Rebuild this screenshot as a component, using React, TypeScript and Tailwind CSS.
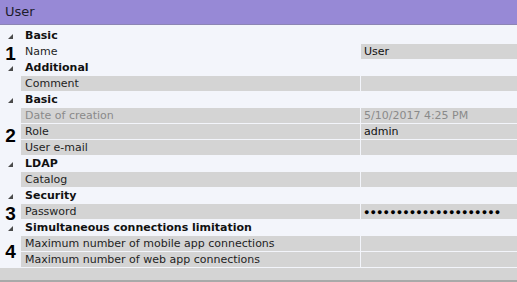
import React from 'react';

type Field = { label: string; value?: string; muted?: boolean; plainLabel?: boolean; password?: boolean };
type Group = { title: string; marker?: string; markerRow?: number; fields: Field[] };

const groups: Group[] = [
    { title: 'Basic', marker: '1', fields: [{ label: 'Name', value: 'User', plainLabel: true }] },
    { title: 'Additional', fields: [{ label: 'Comment' }] },
    {
        title: 'Basic',
        marker: '2',
        markerRow: 1,
        fields: [
            { label: 'Date of creation', value: '5/10/2017 4:25 PM', muted: true },
            { label: 'Role', value: 'admin' },
            { label: 'User e-mail' },
        ],
    },
    { title: 'LDAP', fields: [{ label: 'Catalog' }] },
    { title: 'Security', marker: '3', fields: [{ label: 'Password', password: true }] },
    {
        title: 'Simultaneous connections limitation',
        marker: '4',
        fields: [{ label: 'Maximum number of mobile app connections' }, { label: 'Maximum number of web app connections' }],
    },
];

const Caret = () => (
    <svg width="5" height="5" viewBox="0 0 5 5" className="ml-[8px]">
        <polygon points="5,0 5,5 0,5" fill="#4a4a4a" />
    </svg>
);

const FieldRow: React.FC<{ field: Field }> = ({ field }) => (
    <div className="flex h-4 gap-px pb-px">
        <div className={`w-[339px] pl-[4px] leading-[15px] ${field.plainLabel ? '' : 'bg-[#d4d4d4]'} ${field.muted ? 'text-[#8a8a8a]' : 'text-[#1e1e1e]'}`}>
            {field.label}
        </div>
        <div className={`flex-1 bg-[#d4d4d4] pl-[3px] leading-[15px] ${field.muted ? 'text-[#8a8a8a]' : 'text-[#111]'}`}>
            {field.password ? (
                <span className="text-[9px] tracking-[1.1px] text-black font-['Liberation_Sans',sans-serif]">●●●●●●●●●●●●●●●●●●●●●</span>
            ) : (
                field.value
            )}
        </div>
    </div>
);

const PropertyGroup: React.FC<{ group: Group }> = ({ group }) => (
    <div>
        <div className="flex h-4 items-center">
            <div className="w-[25px] flex items-center">
                <Caret />
            </div>
            <span className="font-bold text-[#111] leading-4">{group.title}</span>
        </div>
        <div className="flex">
            <div className="w-[21px] relative">
                {group.marker && (
                    <span
                        className={`absolute left-0 w-[21px] text-center font-['Liberation_Sans',sans-serif] font-bold text-[19px] leading-none text-black ${
                            group.markerRow === 1 ? 'top-[18px]' : group.fields.length === 2 ? 'top-[6px]' : 'top-[0px]'
                        }`}
                    >
                        {group.marker}
                    </span>
                )}
            </div>
            <div className="flex-1">
                {group.fields.map((f) => (
                    <FieldRow key={f.label} field={f} />
                ))}
            </div>
        </div>
    </div>
);

export default function App() {
    return (
        <div className="w-[517px] h-[282px] overflow-hidden bg-[#f3f5fb] flex flex-col font-['DejaVu_Sans',sans-serif] text-[11px]">
            <div className="h-[25px] shrink-0 bg-[#9789d6] border-b border-[#8c85b4] pl-[5px] flex items-center text-[13px] text-[#1c1c2c]">
                User
            </div>
            <div className="pt-[3px]">
                {groups.map((g, i) => (
                    <PropertyGroup key={i} group={g} />
                ))}
            </div>
            <div className="flex-1 bg-[#d4d4d4] border-b-2 border-[#a9a9a9]" />
        </div>
    );
}
